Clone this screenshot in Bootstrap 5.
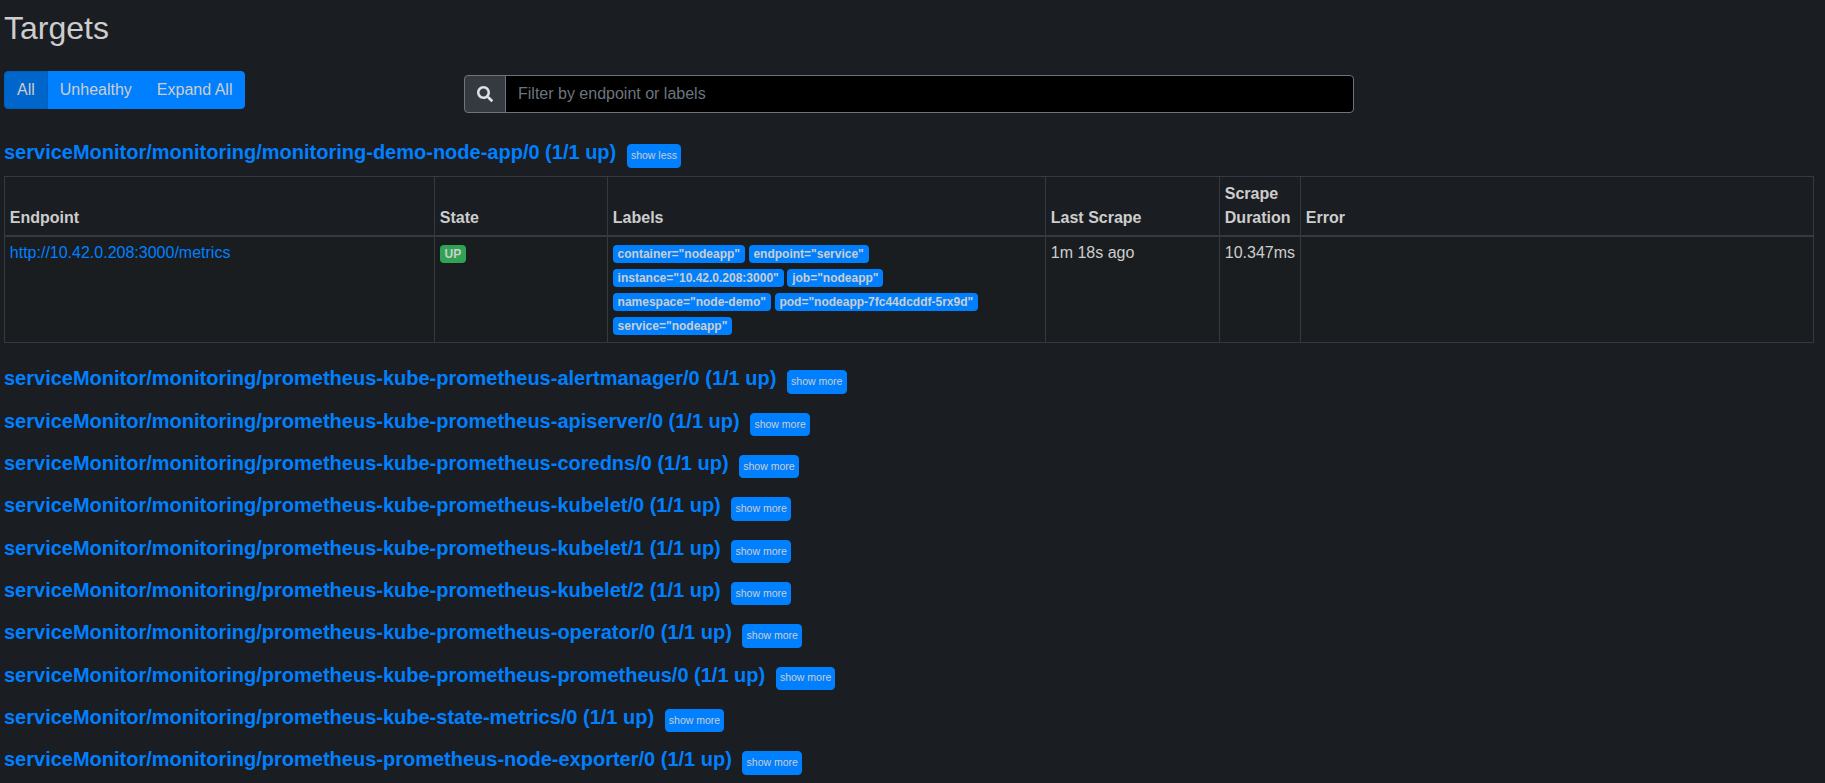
<!DOCTYPE html>
<html lang="en">
<head>
<meta charset="utf-8">
<title>Targets</title>
<link href="https://cdn.jsdelivr.net/npm/bootstrap@5.3.0/dist/css/bootstrap.min.css" rel="stylesheet">
<style>
  body { background: #1a1d21; color: #cdcdcd; font-family: "Liberation Sans", Arial, sans-serif; font-size: 16px; line-height: 1.5; height: 783px; overflow: hidden; }
  main { padding: 9px 11px 0 4px; }
  h2 { font-size: 32px; line-height: 38.4px; margin: 0; font-weight: 400; }
  a { color: #0080ff; text-decoration: none; }
  .toolbar { margin-top: 23.6px; height: 67.2px; }
  .filters { width: 460px; flex: none; }
  .btn-primary { --bs-btn-color: #cdcdcd; --bs-btn-bg: #0080ff; --bs-btn-border-color: #0080ff; --bs-btn-active-color: #cdcdcd; --bs-btn-active-bg: #0066cc; --bs-btn-active-border-color: #0060bf; --bs-btn-border-radius: 4px; }
  .search { width: 890px; height: 38px; margin-top: 4px; }
  .search .input-group-text { width: 42px; padding: 0 12px; background: #343a40; border-color: #6c757d; color: #dee2e6; border-radius: 4px; }
  .search .form-control, .search .form-control:focus { background: #000; border-color: #6c757d; color: #cdcdcd; border-radius: 4px; box-shadow: none; }
  .search .form-control::placeholder { color: #6c757d; }
  .pool { height: 42.34px; font-size: 20px; font-weight: 700; line-height: 28.6px; }
  .pool.opened { height: 37.8px; }
  .pool .btn { font-size: 10.5px; line-height: 15.75px; padding: 2.83px 3.2px; margin: 6.1px 0 0 10.5px; }
  .target-table { width: 1810px; table-layout: fixed; margin: 0 0 21.1px; border-collapse: collapse; --bs-table-bg: transparent; --bs-table-color: #cdcdcd; }
  .target-table > :not(caption) > * > * { padding: 4.8px; border: 1px solid #343a40; color: #cdcdcd; }
  .target-table > thead > tr > th { vertical-align: bottom; border-bottom-width: 2px; }
  .target-table > tbody > tr > td { background: #191d1f; border-top-width: 2px; }
  .tag { --bs-badge-padding-x: .4em; --bs-badge-padding-y: .25em; --bs-badge-border-radius: 4px; --bs-badge-color: #cdcdcd; background: #0080ff; margin-right: 3.8px; }
  .tag.up { background: #31a354; }
</style>
</head>
<body>
<main>
  <h2>Targets</h2>
  <div class="toolbar d-flex align-items-start">
    <div class="filters">
      <div class="btn-group">
        <button class="btn btn-primary active">All</button>
        <button class="btn btn-primary">Unhealthy</button>
        <button class="btn btn-primary">Expand All</button>
      </div>
    </div>
    <div class="search input-group">
      <span class="input-group-text"><svg width="16" height="16" viewBox="0 0 512 512" fill="currentColor"><path d="M505 442.7L405.3 343c-4.5-4.5-10.6-7-17-7H372c27.6-35.3 44-79.700 44-128C416 93.100 322.900 0 208 0S0 93.100 0 208s93.100 208 208 208c48.300 0 92.700-16.400 128-44v16.300c0 6.400 2.500 12.500 7 17l99.700 99.700c9.400 9.400 24.600 9.400 33.900 0l28.300-28.300c9.400-9.400 9.400-24.600.1-34zM208 336c-70.700 0-128-57.200-128-128 0-70.700 57.200-128 128-128 70.700 0 128 57.200 128 128 0 70.700-57.200 128-128 128z"/></svg></span>
      <input class="form-control" placeholder="Filter by endpoint or labels">
    </div>
  </div>

  <div class="pool opened d-flex align-items-start"><a href="#">serviceMonitor/monitoring/monitoring-demo-node-app/0 (1/1 up)</a><button class="btn btn-primary">show less</button></div>
  <table class="table target-table">
    <colgroup><col style="width:430px"><col style="width:173px"><col style="width:438px"><col style="width:174px"><col style="width:81px"><col></colgroup>
    <thead><tr><th>Endpoint</th><th>State</th><th>Labels</th><th>Last Scrape</th><th>Scrape Duration</th><th>Error</th></tr></thead>
    <tbody><tr>
      <td><a href="#">http://10.42.0.208:3000/metrics</a></td>
      <td><span class="badge tag up">UP</span></td>
      <td>
        <div><span class="badge tag">container="nodeapp"</span><span class="badge tag">endpoint="service"</span></div>
        <div><span class="badge tag">instance="10.42.0.208:3000"</span><span class="badge tag">job="nodeapp"</span></div>
        <div><span class="badge tag">namespace="node-demo"</span><span class="badge tag">pod="nodeapp-7fc44dcddf-5rx9d"</span></div>
        <div><span class="badge tag">service="nodeapp"</span></div>
      </td>
      <td>1m 18s ago</td>
      <td>10.347ms</td>
      <td></td>
    </tr></tbody>
  </table>

  <div class="pool d-flex align-items-start"><a href="#">serviceMonitor/monitoring/prometheus-kube-prometheus-alertmanager/0 (1/1 up)</a><button class="btn btn-primary">show more</button></div>
  <div class="pool d-flex align-items-start"><a href="#">serviceMonitor/monitoring/prometheus-kube-prometheus-apiserver/0 (1/1 up)</a><button class="btn btn-primary">show more</button></div>
  <div class="pool d-flex align-items-start"><a href="#">serviceMonitor/monitoring/prometheus-kube-prometheus-coredns/0 (1/1 up)</a><button class="btn btn-primary">show more</button></div>
  <div class="pool d-flex align-items-start"><a href="#">serviceMonitor/monitoring/prometheus-kube-prometheus-kubelet/0 (1/1 up)</a><button class="btn btn-primary">show more</button></div>
  <div class="pool d-flex align-items-start"><a href="#">serviceMonitor/monitoring/prometheus-kube-prometheus-kubelet/1 (1/1 up)</a><button class="btn btn-primary">show more</button></div>
  <div class="pool d-flex align-items-start"><a href="#">serviceMonitor/monitoring/prometheus-kube-prometheus-kubelet/2 (1/1 up)</a><button class="btn btn-primary">show more</button></div>
  <div class="pool d-flex align-items-start"><a href="#">serviceMonitor/monitoring/prometheus-kube-prometheus-operator/0 (1/1 up)</a><button class="btn btn-primary">show more</button></div>
  <div class="pool d-flex align-items-start"><a href="#">serviceMonitor/monitoring/prometheus-kube-prometheus-prometheus/0 (1/1 up)</a><button class="btn btn-primary">show more</button></div>
  <div class="pool d-flex align-items-start"><a href="#">serviceMonitor/monitoring/prometheus-kube-state-metrics/0 (1/1 up)</a><button class="btn btn-primary">show more</button></div>
  <div class="pool d-flex align-items-start"><a href="#">serviceMonitor/monitoring/prometheus-prometheus-node-exporter/0 (1/1 up)</a><button class="btn btn-primary">show more</button></div>
</main>
<script src="https://cdn.jsdelivr.net/npm/bootstrap@5.3.0/dist/js/bootstrap.bundle.min.js"></script>
</body>
</html>
